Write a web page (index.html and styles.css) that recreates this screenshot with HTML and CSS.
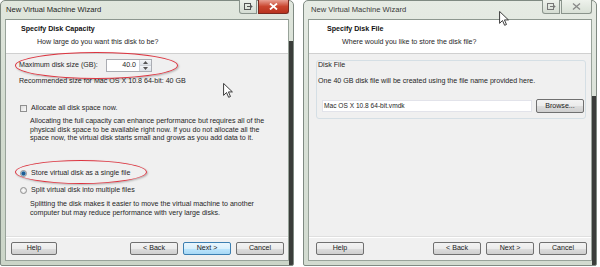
FILE: index.html
```html
<!DOCTYPE html>
<html>
<head>
<meta charset="utf-8">
<link rel="stylesheet" href="styles.css">
</head>
<body>
<div class="screen">
  <div class="win active shade-left">
    <div class="titlebar">
      <span class="title">New Virtual Machine Wizard</span>
      <div class="caption-btns">
        <span class="cbtn restore"><svg width="9" height="7" viewBox="0 0 9 7"><rect x="0.5" y="0.5" width="6" height="6" fill="none" stroke="#555"/><path d="M3 3.5h5M6.5 2l1.5 1.5-1.5 1.5" fill="none" stroke="#555"/></svg></span>
        <span class="cbtn close"><svg width="9" height="7" viewBox="0 0 9 7"><path d="M1 0.5l7 6M8 0.5l-7 6" stroke="#fff" stroke-width="1.8"/></svg></span>
      </div>
    </div>
    <div class="client">
      <div class="header">
        <div class="h-title">Specify Disk Capacity</div>
        <div class="h-sub">How large do you want this disk to be?</div>
      </div>
      <div class="body">
        <div class="size-row">
          <span class="size-label">Maximum disk size (GB):</span>
          <div class="spin">
            <span class="spin-val">40.0</span>
            <span class="spin-arrows">
              <span class="arr"><svg width="5" height="3" viewBox="0 0 5 3"><path d="M0 3L2.5 0 5 3z" fill="#555"/></svg></span>
              <span class="arr"><svg width="5" height="3" viewBox="0 0 5 3"><path d="M0 0L2.5 3 5 0z" fill="#555"/></svg></span>
            </span>
          </div>
        </div>
        <div class="note">Recommended size for Mac OS X 10.8 64-bit: 40 GB</div>
        <div class="opt opt-check"><span class="checkbox"></span><span>Allocate all disk space now.</span></div>
        <p class="desc d1">Allocating the full capacity can enhance performance but requires all of the physical disk space to be available right now. If you do not allocate all the space now, the virtual disk starts small and grows as you add data to it.</p>
        <div class="opt opt-r1"><span class="radio on"></span><span>Store virtual disk as a single file</span></div>
        <div class="opt opt-r2"><span class="radio"></span><span>Split virtual disk into multiple files</span></div>
        <p class="desc d2">Splitting the disk makes it easier to move the virtual machine to another computer but may reduce performance with very large disks.</p>
      </div>
      <div class="footer">
        <span class="btn">Help</span>
        <span class="spacer"></span>
        <span class="btn">&lt; Back</span>
        <span class="btn default">Next &gt;</span>
        <span class="btn">Cancel</span>
      </div>
    </div>
    <div class="ring ring1"></div>
    <div class="ring ring2"></div>
    <svg class="cursor cur1" width="10" height="15" viewBox="0 0 11 17"><path d="M0.5 0.5V14l3.3-3.2 2.4 5.4 2.1-0.9-2.3-5.2h4.5z" fill="#fff" stroke="#222" stroke-width="1"/></svg>
  </div>

  <div class="win inactive shade-right">
    <div class="titlebar">
      <span class="title">New Virtual Machine Wizard</span>
      <div class="caption-btns">
        <span class="cbtn restore"><svg width="9" height="7" viewBox="0 0 9 7"><rect x="0.5" y="0.5" width="6" height="6" fill="none" stroke="#777"/><path d="M3 3.5h5M6.5 2l1.5 1.5-1.5 1.5" fill="none" stroke="#777"/></svg></span>
        <span class="cbtn close"><svg width="9" height="7" viewBox="0 0 9 7"><path d="M1 0.5l7 6M8 0.5l-7 6" stroke="#888" stroke-width="1.3"/></svg></span>
      </div>
    </div>
    <div class="client">
      <div class="header">
        <div class="h-title">Specify Disk File</div>
        <div class="h-sub">Where would you like to store the disk file?</div>
      </div>
      <div class="body">
        <div class="group">
          <div class="group-label">Disk File</div>
          <div class="group-text">One 40 GB disk file will be created using the file name provided here.</div>
          <div class="file-row">
            <span class="textbox">Mac OS X 10.8 64-bit.vmdk</span>
            <span class="btn browse">Browse...</span>
          </div>
        </div>
      </div>
      <div class="footer">
        <span class="btn">Help</span>
        <span class="spacer"></span>
        <span class="btn">&lt; Back</span>
        <span class="btn">Next &gt;</span>
        <span class="btn">Cancel</span>
      </div>
    </div>
    <svg class="cursor cur2" width="10" height="15" viewBox="0 0 11 17"><path d="M0.5 0.5V14l3.3-3.2 2.4 5.4 2.1-0.9-2.3-5.2h4.5z" fill="#fff" stroke="#222" stroke-width="1"/></svg>
  </div>
</div>
</body>
</html>
```

FILE: styles.css
```css
* { box-sizing: border-box; }
html, body { margin: 0; padding: 0; background: #fff; }
body {
  width: 600px;
  height: 267px;
  overflow: hidden;
  font-family: "Liberation Sans", Arial, sans-serif;
  font-size: 7.1px;
  color: #262626;
}
.screen {
  display: flex;
  gap: 9px;
}
.win {
  position: relative;
  width: 294px;
  height: 266px;
  display: flex;
  flex-direction: column;
  border: 1px solid #7f8a82;
  border-radius: 5px 5px 2px 2px;
  padding: 0 4px 4px 4px;
}
.win.active {
  background:
    linear-gradient(to right, transparent 288px, #3a3d3a 288px) no-repeat 0 40px / 100% 230px,
    linear-gradient(#e1e7de, #d3dcd0 40%, #cbd5c8);
}
.win.inactive {
  background:
    linear-gradient(to right, transparent 288px, #3a3d3a 288px) no-repeat 0 95px / 100% 175px,
    linear-gradient(#e6ebe4, #dae2d8 40%, #d2dbd0);
}
.titlebar {
  height: 18px;
  display: flex;
  align-items: flex-start;
  justify-content: space-between;
}
.title {
  font-size: 7.6px;
  line-height: 18px;
  padding-left: 1px;
  color: #1e1e1e;
}
.inactive .title { padding-left: 3px; color: #3a3a3a; }
.caption-btns {
  display: flex;
  gap: 1px;
  margin-top: -1px;
}
.cbtn {
  height: 14px;
  display: flex;
  align-items: center;
  justify-content: center;
  border: 1px solid #8a948c;
  border-top: none;
}
.cbtn.restore {
  width: 18px;
  border-radius: 0 0 0 3px;
  background: linear-gradient(#eef2ec, #d4dcd2);
}
.cbtn.close {
  width: 31px;
  border-radius: 0 0 3px 0;
}
.active .cbtn.close {
  background: linear-gradient(#e8a093, #c9452f 50%, #b8321e);
  border-color: #7a2a20;
}
.inactive .cbtn.close {
  background: linear-gradient(#eef2ec, #d8e0d6);
}
.client {
  flex: 1;
  display: flex;
  flex-direction: column;
  background: #f0f0f0;
  border: 1px solid #98a39a;
  border-top-color: #8d978f;
}
.header {
  height: 34px;
  background: #fff;
  border-bottom: 1px solid #d0d0d0;
  padding: 5px 0 0 15px;
  line-height: 9px;
}
.h-title {
  font-weight: bold;
  color: #111;
}
.h-sub {
  margin-top: 4px;
  padding-left: 16px;
}
.inactive .header { padding-left: 18px; }
.inactive .h-sub { padding-left: 15px; }
.body {
  flex: 1;
  padding: 5px 0 0 13px;
  line-height: 9px;
}
.size-row {
  display: flex;
  align-items: center;
  height: 13px;
}
.size-label { width: 87px; }
.spin {
  display: flex;
  height: 13px;
  border: 1px solid #abadb3;
  background: #fff;
}
.spin-val {
  width: 32px;
  text-align: right;
  padding-right: 3px;
  line-height: 11px;
}
.spin-arrows {
  width: 12px;
  display: flex;
  flex-direction: column;
  border-left: 1px solid #cfd3d8;
}
.arr {
  flex: 1;
  display: flex;
  align-items: center;
  justify-content: center;
  background: linear-gradient(#f4f6f8, #dde2e8);
}
.arr + .arr { border-top: 1px solid #cfd3d8; }
.note { margin-top: 5px; }
.opt {
  display: flex;
  align-items: center;
  gap: 4px;
  padding-left: 1px;
}
.opt-check { margin-top: 18px; }
.opt-r1 { margin-top: 26px; }
.opt-r2 { margin-top: 8px; }
.checkbox {
  width: 7px;
  height: 7px;
  border: 1px solid #8f8f8f;
  background: linear-gradient(135deg, #dcdcdc, #fbfbfb);
}
.radio {
  width: 7px;
  height: 7px;
  border-radius: 50%;
  border: 1px solid #8f8f8f;
  background: radial-gradient(circle, #fff, #d8d8d8);
}
.radio.on {
  background: radial-gradient(circle, #1e5d93 0 1.6px, #7fb2da 2.2px, #e8e8e8 2.8px);
}
.desc {
  margin: 4px 0 0 11px;
  width: 243px;
  line-height: 8.6px;
}
.desc.d2 { margin-top: 5px; line-height: 9px; width: 245px; }
.footer {
  height: 24px;
  border-top: 1px solid #dfdfdf;
  box-shadow: inset 0 1px 0 #fff;
  display: flex;
  align-items: flex-start;
  gap: 5px;
  padding: 5px 4px 0 5px;
}
.spacer { flex: 1; }
.btn {
  width: 48px;
  height: 13px;
  border: 1px solid #707070;
  border-radius: 2px;
  background: linear-gradient(#f3f3f3 0, #ebebeb 50%, #dddddd 51%, #cfcfcf);
  text-align: center;
  line-height: 11px;
  color: #1a1a1a;
}
.footer .btn:first-child { width: 46px; }
.inactive .footer .btn:first-child { width: 48px; margin-left: 2px; }
.btn.default {
  border-color: #3c7fb1;
  background: linear-gradient(#eaf6fd 0, #d9f0fc 50%, #bee6fd 51%, #a7d9f5);
}
.group {
  margin: 1px 5px 0 -6px;
  height: 59px;
  border: 1px solid #d5dfe5;
  border-radius: 3px;
  padding: 0 0 0 1px;
}
.group-label { line-height: 8px; margin-top: 0; }
.group-text { margin-top: 8px; }
.file-row {
  display: flex;
  align-items: center;
  gap: 4px;
  margin-top: 13px;
  padding-left: 4px;
}
.textbox {
  width: 210px;
  height: 12px;
  background: #fff;
  border: 1px solid #e2e3ea;
  line-height: 10px;
  padding-left: 1px;
  font-size: 6.6px;
}
.browse { height: 14px; line-height: 12px; }
.ring {
  position: absolute;
  border: 1.5px solid #dc3540;
  border-radius: 50%;
  box-shadow: 1px 1px 2px rgba(0,0,0,0.25);
}
.ring1 { left: 14px; top: 51px; width: 163px; height: 27px; }
.ring2 { left: 14px; top: 159px; width: 132px; height: 24px; }
.cursor { position: absolute; }
.cur1 { left: 222px; top: 82px; }
.cur2 { left: 195px; top: 10px; }
```
